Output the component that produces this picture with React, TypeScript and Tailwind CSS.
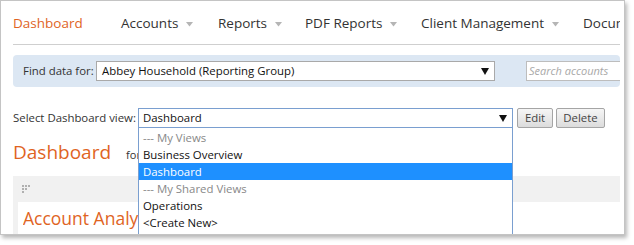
import React from "react";

const Caret = () => (
  <svg width="7" height="5" viewBox="0 0 7 5" className="ml-[8px] mt-[2px]">
    <path d="M0 0 L7 0 L3.5 4.5 Z" fill="#b5b5b5" />
  </svg>
);

const BlackArrow = () => (
  <svg width="8" height="7" viewBox="0 0 8 7">
    <path d="M0 0 L8 0 L4 7 Z" fill="#111" />
  </svg>
);

export default function App() {
  const font = { fontFamily: '"Open Sans", "Noto Sans", sans-serif' };
  return (
    <div className="w-[634px] h-[245px] bg-white relative" style={font}>
      <div className="w-[625px] h-[235px] border border-[#c4c4c4] shadow-[2px_3px_4px_rgba(0,0,0,0.28)] bg-white overflow-hidden relative pl-[12px] pr-[4px]">
        {/* Nav */}
        <div className="h-[44px] border-b border-[#cfcfcf] flex items-center text-[13.5px] text-[#333] whitespace-nowrap overflow-hidden pt-[2px]">
          <div className="w-[108px] shrink-0 text-[#e0641f]">Dashboard</div>
          <div className="w-[97px] shrink-0 flex items-center">Accounts<Caret /></div>
          <div className="w-[87px] shrink-0 flex items-center">Reports<Caret /></div>
          <div className="w-[116px] shrink-0 flex items-center">PDF Reports<Caret /></div>
          <div className="w-[162px] shrink-0 flex items-center">Client Management<Caret /></div>
          <div className="w-[40px] shrink-0 overflow-hidden">Documents</div>
        </div>

        {/* Find data bar */}
        <div className="mt-[10px] h-[32px] bg-[#dce7f3] rounded-[4px] flex items-center pl-[10px] text-[11.4px] text-[#333] whitespace-nowrap overflow-hidden">
          <span className="w-[73px] shrink-0">Find data for:</span>
          <div className="w-[399px] h-[20px] shrink-0 bg-white border border-[#a9a9a9] flex items-center justify-between pl-[5px] pr-[5px] text-[#111]">
            <span>Abbey Household (Reporting Group)</span>
            <BlackArrow />
          </div>
          <div className="ml-[31px] w-[110px] h-[20px] shrink-0 bg-white border border-[#bdbdbd] flex items-center pl-[2px] text-[11px] italic text-[#a8a8a8]">
            Search accounts
          </div>
        </div>

        {/* Select Dashboard view row */}
        <div className="mt-[21px] h-[20px] flex items-center text-[11.4px] text-[#333] whitespace-nowrap">
          <span className="w-[125px] shrink-0">Select Dashboard view:</span>
          <div className="w-[375px] h-[20px] shrink-0 bg-white border border-[#7a9fd0] flex items-center justify-between pl-[4px] pr-[5px] text-[#111]">
            <span>Dashboard</span>
            <BlackArrow />
          </div>
          <button className="ml-[4px] w-[36px] h-[20px] shrink-0 border border-[#a5a5a5] bg-gradient-to-b from-[#f6f6f6] to-[#dcdcdc] text-[#444] text-[11.4px] rounded-[2px]">
            Edit
          </button>
          <button className="ml-[3px] w-[49px] h-[20px] shrink-0 border border-[#a5a5a5] bg-gradient-to-b from-[#f6f6f6] to-[#dcdcdc] text-[#444] text-[11.4px] rounded-[2px]">
            Delete
          </button>
        </div>

        {/* Heading */}
        <div className="mt-[11px] h-[28px] flex items-baseline whitespace-nowrap">
          <span className="text-[19px] leading-[26px] text-[#e0641f]">Dashboard</span>
          <span className="ml-[15px] text-[11px] text-[#333]">for</span>
        </div>

        {/* Gray panel */}
        <div className="mt-[9px] bg-[#f1f1f1] pl-[5px] h-[80px]">
          <div className="h-[26px] flex items-center pl-[4px]">
            <svg width="8" height="8" viewBox="0 0 8 8">
              <rect x="0" y="0" width="2" height="2" fill="#b0b0b0" />
              <rect x="3" y="0" width="2" height="2" fill="#b0b0b0" />
              <rect x="6" y="0" width="2" height="2" fill="#b0b0b0" />
              <rect x="0" y="3" width="2" height="2" fill="#b0b0b0" />
              <rect x="3" y="3" width="2" height="2" fill="#b0b0b0" />
              <rect x="0" y="6" width="2" height="2" fill="#b0b0b0" />
            </svg>
          </div>
          <div className="bg-white h-[60px] pl-[5px] pt-[3px]">
            <div className="w-[115px] overflow-hidden text-[17.5px] text-[#e0641f] whitespace-nowrap">Account Analytics</div>
          </div>
        </div>

        {/* Dropdown list */}
        <div className="absolute left-[137px] top-[127px] w-[375px] h-[120px] bg-white border-l border-r border-[#7a9fd0] text-[11.4px] text-[#111] whitespace-nowrap">
          <div className="h-[17px] leading-[17px] mt-[1px] pl-[4px] text-[#888]">--- My Views</div>
          <div className="h-[17px] leading-[17px] pl-[4px]">Business Overview</div>
          <div className="h-[17px] leading-[17px] pl-[4px] bg-[#1e90ff] text-white">Dashboard</div>
          <div className="h-[17px] leading-[17px] pl-[4px] text-[#888]">--- My Shared Views</div>
          <div className="h-[17px] leading-[17px] pl-[4px]">Operations</div>
          <div className="h-[17px] leading-[17px] pl-[4px]">&lt;Create New&gt;</div>
        </div>
      </div>
    </div>
  );
}
